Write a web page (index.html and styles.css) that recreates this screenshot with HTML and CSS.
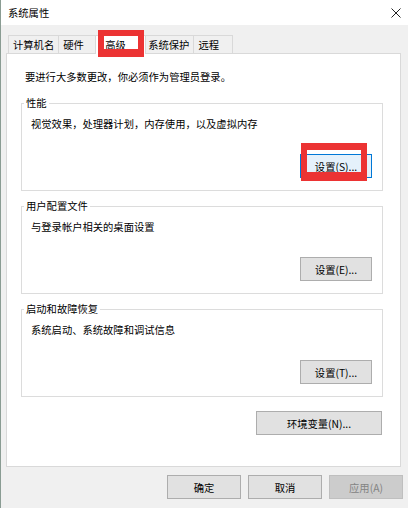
FILE: index.html
```html
<!DOCTYPE html>
<html lang="zh-CN">
<head>
    <meta charset="UTF-8">
    <title>系统属性</title>
    <link rel="stylesheet" href="styles.css">
</head>
<body>

    <div class="window">
        <div class="titlebar">
            <span class="title">系统属性</span>
            <svg class="close" width="10" height="10" viewBox="0 0 10 10">
                <path d="M0.5 0.5L9.5 9.5M9.5 0.5L0.5 9.5" stroke="#222" stroke-width="1" fill="none"/>
            </svg>
        </div>

        <div class="tabs">
            <div class="tab">计算机名</div>
            <div class="tab">硬件</div>
            <div class="tab selected">高级<span class="mark mark-tab"></span></div>
            <div class="tab">系统保护</div>
            <div class="tab">远程</div>
        </div>

        <div class="panel">
            <p class="note">要进行大多数更改，你必须作为管理员登录。</p>

            <fieldset class="group">
                <legend>性能</legend>
                <p>视觉效果，处理器计划，内存使用，以及虚拟内存</p>
                <div class="row">
                    <button class="btn default">设置(S)...</button>
                    <span class="mark mark-btn"></span>
                </div>
            </fieldset>

            <fieldset class="group">
                <legend>用户配置文件</legend>
                <p>与登录帐户相关的桌面设置</p>
                <div class="row">
                    <button class="btn">设置(E)...</button>
                </div>
            </fieldset>

            <fieldset class="group">
                <legend>启动和故障恢复</legend>
                <p>系统启动、系统故障和调试信息</p>
                <div class="row">
                    <button class="btn">设置(T)...</button>
                </div>
            </fieldset>

            <div class="row env">
                <button class="btn wide">环境变量(N)...</button>
            </div>
        </div>

        <div class="actions">
            <button class="btn">确定</button>
            <button class="btn">取消</button>
            <button class="btn" disabled>应用(A)</button>
        </div>
    </div>

</body>
</html>
```

FILE: styles.css
```css
body {
    margin: 0;
    font-family: "Noto Sans CJK SC", sans-serif;
    font-size: 10.3px;
    color: #000;
}
.window {
    width: 408px;
    height: 508px;
    box-sizing: border-box;
    background: #f0f0f0;
    border-left: 1px solid #8a9c93;
}
.titlebar {
    height: 25px;
    background: #fff;
    display: flex;
    align-items: center;
    justify-content: space-between;
    padding: 0 7px 0 7px;
}
.close {
    display: block;
}

/* tab strip */
.tabs {
    display: flex;
    margin-top: 10px;
    padding-left: 7px;
    height: 18px;
}
.tab {
    position: relative;
    box-sizing: border-box;
    height: 18px;
    min-width: 40px;
    padding: 0 4px;
    margin-right: -1px;
    line-height: 17px;
    border: 1px solid #d9d9d9;
    border-bottom: none;
    white-space: nowrap;
}
/* the active tab is inflated 2px over its neighbours */
.tab.selected {
    min-width: 51px;
    padding-left: 9px;
    margin: 0 -3px 0 -2px;
    height: 19px;
    background: #fff;
    z-index: 1;
}

/* red highlight frames */
.mark {
    position: absolute;
    box-sizing: border-box;
    border: 6px solid #ec3333;
    z-index: 2;
}
.mark-tab {
    left: 2px;
    top: -6px;
    width: 46px;
    height: 27px;
    border-bottom-width: 8px;
}
.mark-btn {
    right: 5px;
    top: -11px;
    width: 66px;
    height: 38px;
    border-top-width: 7px;
    border-bottom-width: 9px;
}

.panel {
    width: 395px;
    margin-left: 5px;
    box-sizing: border-box;
    background: #fff;
    border: 1px solid #d9d9d9;
    padding: 16px 17px 31px 14px;
}
.note {
    margin: 0 0 12px;
    padding-left: 4px;
    line-height: 14px;
}
.group {
    margin: 0;
    min-width: 0;
    border: 1px solid #dcdcdc;
    padding: 7px 10px 12px 9px;
}
.group + .group {
    margin-top: 8px;
}
.group legend {
    margin-left: -7px;
    padding: 0 2px;
    line-height: 14px;
}
.group p {
    margin: 0;
    line-height: 14px;
}
.row {
    position: relative;
    display: flex;
    justify-content: flex-end;
    margin-top: 23px;
}
.env {
    margin-top: 14px;
    margin-right: 1px;
}

.btn {
    width: 72px;
    height: 24px;
    padding: 0;
    font: inherit;
    color: #000;
    background: #e1e1e1;
    border: 1px solid #adadad;
}
.btn.default {
    background: #e5f1fb;
    border-color: #0078d7;
}
.btn.wide {
    width: 126px;
}
.btn:disabled {
    background: #cccccc;
    border-color: #bfbfbf;
    color: #838383;
}

.actions {
    display: flex;
    justify-content: flex-end;
    gap: 7px;
    margin-top: 8px;
    padding-right: 5px;
}
.actions .btn {
    width: 74px;
}
```
